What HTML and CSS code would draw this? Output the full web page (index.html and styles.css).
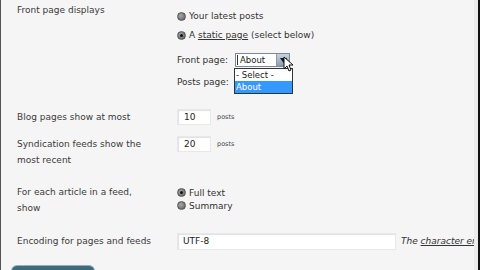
FILE: index.html
```html
<!DOCTYPE html>
<html>
<head>
<meta charset="utf-8">
<link rel="stylesheet" href="styles.css">
</head>
<body>
<div class="frame">
  <div class="form">
    <div class="row row-front">
      <div class="label">Front page displays</div>
      <div class="field">
        <div class="line l1"><span class="radio"></span><span>Your latest posts</span></div>
        <div class="line l2"><span class="radio checked"></span><span>A <a class="link">static page</a> (select below)</span></div>
        <div class="line l3">
          <span class="sublabel">Front page:</span>
          <span class="select-wrap">
            <span class="select"><span class="sel-text">About</span><span class="sel-btn"><svg width="7" height="5" viewBox="0 0 7 5"><path d="M0 0H7L3.5 5Z" fill="#1a1a1a"/></svg></span></span>
            <span class="dropdown">
              <span class="opt">- Select -</span>
              <span class="opt active">About</span>
            </span>
            <svg class="cursor" width="10" height="16" viewBox="0 0 10 16"><path d="M1 1V13L4 10L6 15L8 14L6 9H10Z" fill="#fff" stroke="#111" stroke-width="1" stroke-linejoin="round"/></svg>
          </span>
        </div>
        <div class="line l4"><span class="sublabel">Posts page:</span></div>
      </div>
    </div>
    <div class="row row-blog">
      <div class="label">Blog pages show at most</div>
      <div class="field"><span class="input small">10</span><span class="unit">posts</span></div>
    </div>
    <div class="row row-synd">
      <div class="label">Syndication feeds show the<br>most recent</div>
      <div class="field"><span class="input small">20</span><span class="unit">posts</span></div>
    </div>
    <div class="row row-article">
      <div class="label">For each article in a feed,<br>show</div>
      <div class="field">
        <div class="rline"><span class="radio checked"></span><span>Full text</span></div>
        <div class="rline"><span class="radio"></span><span>Summary</span></div>
      </div>
    </div>
    <div class="row row-enc">
      <div class="label">Encoding for pages and feeds</div>
      <div class="field"><span class="input wide">UTF-8</span><span class="desc">The <a class="link">character enco</a></span></div>
    </div>
    <div class="btn-row"><span class="button"></span></div>
  </div>
</div>
</body>
</html>
```
FILE: styles.css
```css
html, body {
  margin: 0;
  padding: 0;
  width: 480px;
  height: 270px;
  overflow: hidden;
  background: #f4f4f4;
}
.frame {
  width: 480px;
  height: 270px;
  box-sizing: border-box;
  border-left: 1px solid #555;
  border-right: 2px solid #111;
  background: #f5f5f5;
  overflow: hidden;
  position: relative;
  font-family: "DejaVu Sans", Verdana, sans-serif;
  font-size: 9px;
  color: #333;
}
.frame::after {
  content: "";
  position: absolute;
  right: 0;
  top: 0;
  width: 4px;
  height: 270px;
  background: #ececec;
}
.form {
  padding-left: 16px;
}
.row {
  display: grid;
  grid-template-columns: 160px 1fr;
}
.label {
  line-height: 16px;
  color: #3a3a3a;
}
.field {
  white-space: nowrap;
}
.row-front { padding-top: 2px; height: 98px; }
.line { display: flex; align-items: center; height: 16px; }
.l1 { margin-top: 6px; }
.l2 { margin-top: 3px; }
.l3 { margin-top: 9px; }
.l4 { margin-top: 6px; }
.radio {
  display: inline-block;
  width: 7px;
  height: 7px;
  border: 1px solid #555;
  border-radius: 50%;
  background: radial-gradient(circle at 40% 40%, #aaa, #555);
  margin-right: 3px;
  box-sizing: content-box;
  position: relative;
  flex: none;
}
.radio.checked::after {
  content: "";
  position: absolute;
  left: 2px;
  top: 2px;
  width: 3px;
  height: 3px;
  border-radius: 50%;
  background: #111;
}
.link {
  color: #333;
  text-decoration: underline;
}
.sublabel { width: 58px; display: inline-block; }
.select-wrap { position: relative; display: inline-block; height: 14px; }
.select {
  display: flex;
  width: 55px;
  height: 14px;
  box-sizing: border-box;
  border: 1px solid #7a8a99;
  background: #fff;
}
.sel-text {
  flex: 1;
  padding-left: 2px;
  color: #222;
  border-left: 1px solid #333;
  margin: 1px 0 1px 1px;
  line-height: 10px;
  font-size: 8.5px;
}
.sel-btn {
  width: 12px;
  background: linear-gradient(#c8d3de, #8a9bb0);
  border-left: 1px solid #8a9bb0;
  display: flex;
  align-items: center;
  justify-content: center;
}
.dropdown {
  position: absolute;
  left: -1px;
  top: 15px;
  width: 57px;
  border: 1px solid #333;
  background: #fff;
  display: flex;
  flex-direction: column;
  z-index: 2;
}
.opt {
  line-height: 12px;
  height: 12px;
  padding-left: 1px;
  color: #222;
  font-size: 8.5px;
}
.opt.active {
  background: #3399ff;
  color: #fff;
}
.cursor {
  position: absolute;
  left: 48px;
  top: 3px;
  z-index: 3;
}
.row-blog { height: 28px; align-items: center; margin-top: 3px; }
.row-blog .field, .row-synd .field { display: flex; align-items: center; }
.input {
  display: inline-block;
  background: #fff;
  box-sizing: border-box;
  border: 1px solid #e8e8e8;
  box-shadow: inset 1px 1px 1px #e0e0e0;
  padding-left: 6px;
  color: #222;
}
.input.small { width: 34px; height: 16px; line-height: 14px; }
.unit { font-size: 6.5px; margin-left: 6px; color: #444; }
.row-synd { height: 44px; align-items: start; padding-top: 5px; }
.row-synd .field { height: 16px; }
.row-article { height: 44px; padding-top: 4px; }
.row-article .field { padding-top: 2px; }
.rline { display: flex; align-items: center; height: 13px; }
.row-enc { margin-top: 2px; height: 22px; align-items: center; }
.row-enc .field { display: flex; align-items: center; overflow: hidden; }
.input.wide { width: 219px; height: 17px; line-height: 15px; padding-left: 5px; flex: none; }
.desc { margin-left: 5px; font-style: italic; color: #333; }
.btn-row { margin-top: 13px; margin-left: -6px; }
.button {
  display: block;
  width: 82px;
  height: 20px;
  border-radius: 6px;
  background: linear-gradient(#3e6e80, #255566);
  border: 1px solid #9ab;
}
```
